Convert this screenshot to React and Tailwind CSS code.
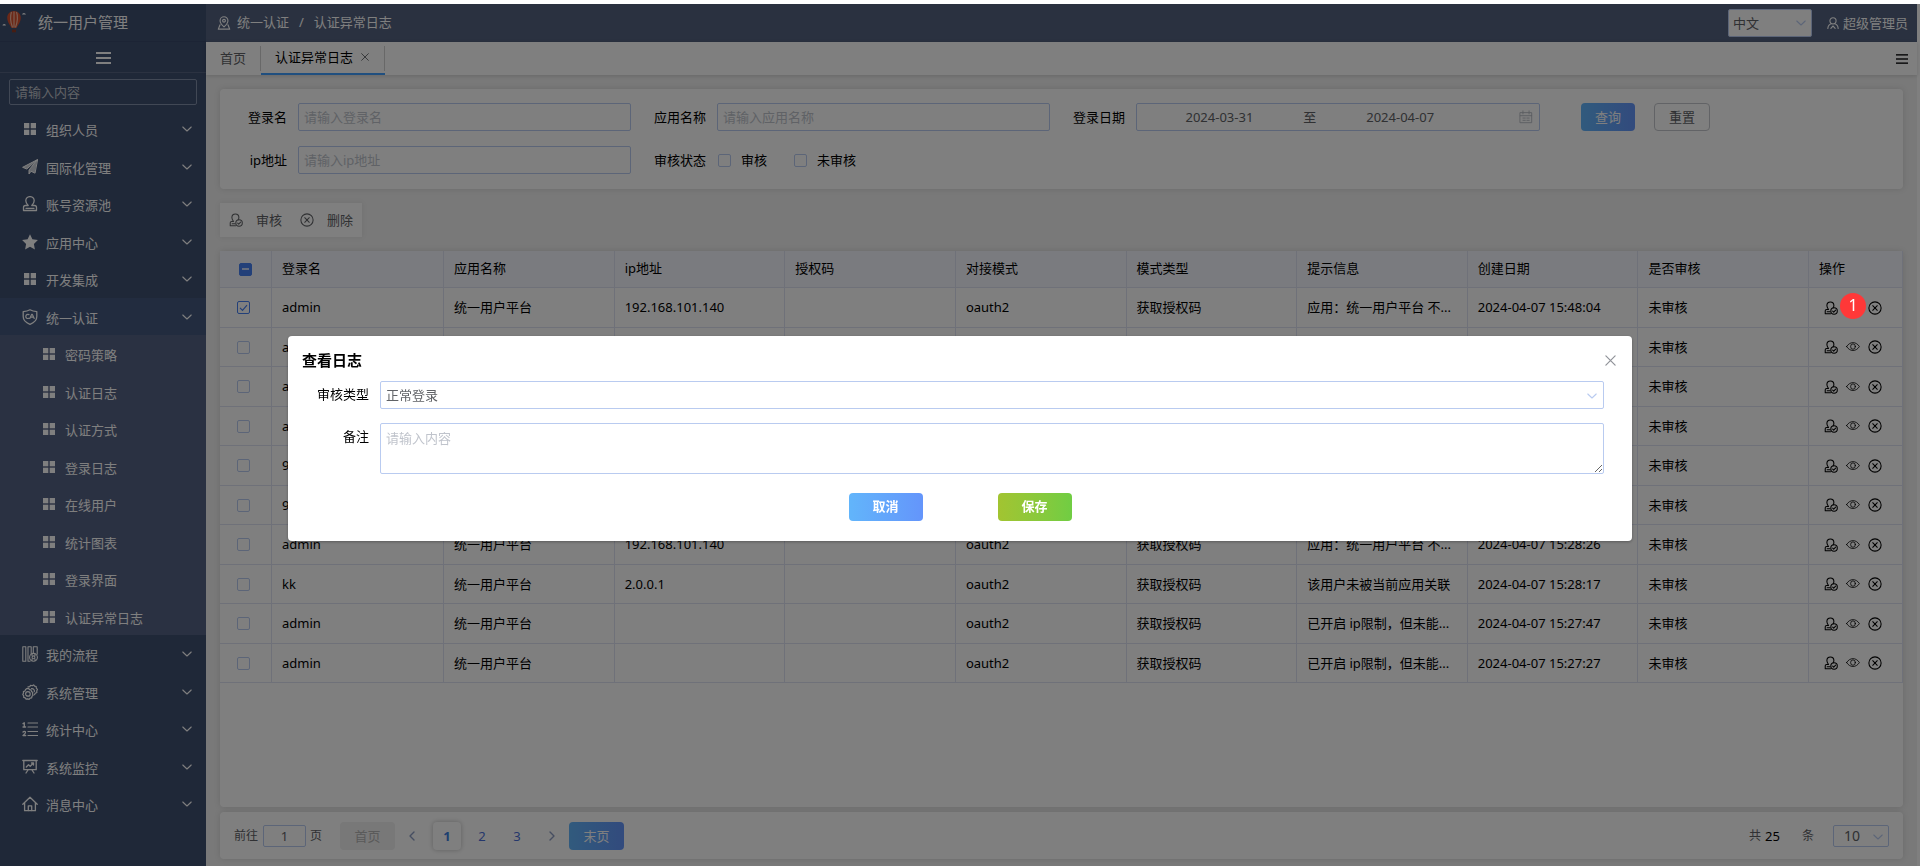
import React from 'react';

function Svg({ className = 'size-4', children, sw = 1.3, box = '0 0 16 16' }) {
  return (
    <svg viewBox={box} className={`shrink-0 ${className}`} fill="none" stroke="currentColor" strokeWidth={sw} strokeLinecap="round" strokeLinejoin="round" aria-hidden="true">
      {children}
    </svg>
  );
}

const GridIcon = ({ className = 'size-3' }) => (
  <svg viewBox="0 0 12 12" className={`shrink-0 ${className}`} fill="currentColor" aria-hidden="true">
    <rect x="0" y="0" width="5.3" height="5.3" /><rect x="6.7" y="0" width="5.3" height="5.3" />
    <rect x="0" y="6.7" width="5.3" height="5.3" /><rect x="6.7" y="6.7" width="5.3" height="5.3" />
  </svg>
);
const PlaneIcon = () => (
  <Svg sw={1}><path d="M15.300.7.600 8.300l4.200 1.700L15.300.7 7 11v4l2-2.700 3.700 1.700z" fill="currentColor" fillOpacity="0.75" /></Svg>
);
const StampIcon = () => (
  <Svg><path d="M6.200 9.500C4.800 8 3.800 6.600 3.800 4.800a4.200 4.200 0 0 1 8.400 0c0 1.800-1 3.200-2.400 4.700h2.700c1.300 0 2 .8 2 2v3H1.500v-3c0-1.200.7-2 2-2z" /><path d="M4 12.300h8" /></Svg>
);
const StarIcon = () => (
  <Svg><path d="m8 .3 2.400 5 5.500.8-4 3.800 1 5.500L8 12.800l-4.900 2.600 1-5.500L.1 6.100l5.500-.8z" fill="currentColor" stroke="none" /></Svg>
);
const ShieldIcon = () => (
  <Svg>
    <path d="M8 .8c2 1.200 4.300 1.700 6.800 1.800v5c0 3.700-2.500 6.100-6.800 7.700C3.700 13.700 1.200 11.300 1.200 7.600v-5C3.700 2.500 6 2 8 .8z" />
    <path d="M7 5.600C5.400 4.900 3.800 5.700 3.800 7.400s1.500 2.500 3 1.900M7.800 9.500l1.900-4.200h.6l1.900 4.200M8.700 8.200h2.700" strokeWidth="1.200" />
  </Svg>
);
const FlowIcon = () => (
  <Svg sw={1.1}>
    <path d="M.8.8h3v14.400h-3zM6 .8h3.200v7M6 .8v14.400h2M11.300 7V.8h3.900v7.500" /><circle cx="11.500" cy="11.300" r="3.900" /><circle cx="11.500" cy="11.300" r="1.400" /><path d="M10 8v1.500M13 8v1.500M10 14.500V13M13 14.500V13" />
  </Svg>
);
const GearIcon = () => (
  <Svg sw={1.2}>
    <path d="M5 4.600l1.600-.2.900 1.300 1.500.2.500 1.500 1.300 1-.3 1.500.6 1.400-1.200 1.100-.2 1.500-1.600.3-1 1.200-1.500-.5-1.500.3-.9-1.300-1.500-.5v-1.500L.8 10.500l.7-1.400-.1-1.500 1.500-.6.7-1.400z" />
    <circle cx="5.900" cy="9.900" r="2.300" />
    <path d="M6 2.900l1.700-.3L8.600 1.300l1.500.5 1.500-.9 1 1.300 1.600.3.100 1.700 1.100 1.200-.7 1.500.2 1.600-1.600.7-.8 1.500M9.500 4.600a2.400 2.400 0 0 1 2.800 3" />
  </Svg>
);
const ListIcon = () => (
  <Svg sw={1.2}><path d="M6 2h9.500M6 6h9.500M6 10.500h9.500M6 14.500h9.500" /><path d="M1 2.600 2.300 1.800V6M1 6h2.600M1 11q1.300-1.300 2.400-.2c.8 1.300-1.200 2.300-2.400 3.700h2.700" strokeWidth="1.300" /></Svg>
);
const BoardIcon = () => (
  <Svg><path d="M.8 1.500h14.400M1.800 1.500v9.200h12.400V1.500M6 11l-2 3M10 11l2 3" /><path d="M4.300 8l2.200-2.300 1.700 1.600 3.300-3.300M9.500 4h2v2" /></Svg>
);
const HomeIcon = () => (
  <Svg><path d="M.8 8.200 8 1.200l7.200 7M2.600 7v7.700h10.800V7" /><path d="M6.300 14.500V9.800h3.400v4.700" /></Svg>
);
const Chevron = ({ className = 'size-2.5' }) => (
  <Svg className={className} sw={1.1} box="0 0 10 10"><path d="m.8 3 4.200 4 4.200-4" /></Svg>
);
const Bars = ({ className = 'w-3.5 h-3' }) => (
  <svg viewBox="0 0 15 12" preserveAspectRatio="none" className={className} fill="currentColor" aria-hidden="true">
    <rect width="15" height="2" /><rect y="5" width="15" height="2" /><rect y="10" width="15" height="2" />
  </svg>
);
const AuditIcon = () => (
  <Svg className="size-3.5" sw={1.2}>
    <path d="M7.500 14.500H1.400v-3.300c0-1 .7-1.600 1.700-1.600h2C4.300 8.300 3.300 7 3.300 5.100a4 4 0 0 1 8 0c0 1-.3 1.800-.8 2.600" /><path d="M3.600 12.300H7" />
    <circle cx="11.500" cy="11.400" r="3.700" /><path d="m9.900 11.500 1.200 1.200 2.200-2.300" />
  </Svg>
);
const EyeIcon = () => (
  <Svg className="size-3.5" sw={0.9}><path d="M.7 7.500C2.500 4.700 5 3 8 3s5.500 1.700 7.300 4.500C13.500 10.300 11 12 8 12S2.500 10.300.7 7.500z" /><ellipse cx="8" cy="7.500" rx="2.700" ry="3.100" /></Svg>
);
const CloseCircle = () => (
  <Svg className="size-3.5" sw={1.2}><circle cx="8" cy="8" r="7" /><path d="m5.400 5.400 5.200 5.200M10.600 5.400l-5.200 5.200" /></Svg>
);
const Cross = ({ className = 'size-2' }) => (
  <Svg className={className} sw={1.1} box="0 0 10 10"><path d="m.8.8 8.400 8.400M9.200.8.800 9.200" /></Svg>
);
const LocationIcon = () => (
  <Svg className="size-3.5"><path d="M8 12.500C5 9.800 3.500 7.800 3.500 5.400a4.500 4.500 0 0 1 9 0c0 2.400-1.500 4.400-4.500 7.100z" /><circle cx="8" cy="5.400" r="1.600" /><path d="M3.500 10 1.500 15h13l-2-5" /></Svg>
);
const UserIcon = () => (
  <Svg className="size-3" box="0 0 14 14"><circle cx="7" cy="4.500" r="3.600" /><path d="M1 13.300c.2-3 1.800-4.800 4-5.400M13 13.300c-.2-3-1.800-4.800-4-5.400M4.500 13.200 7 10.500l2.500 2.700" /></Svg>
);
const CalendarIcon = () => (
  <Svg className="size-3.5" sw={1}><path d="M1.500 3h13v11.500h-13zM1.500 6.500h13M4.500 1v3.500M11.500 1v3.500M4.500 9.200h2.700M9 9.200h2.700M4.500 11.800h2.700M9 11.800h2.700" /></Svg>
);
const Balloon = () => (
  <svg viewBox="0 0 26 24" className="h-6 w-[26px] shrink-0" aria-hidden="true">
    <path d="M12 1c4 0 6.800 3 6.800 6.800 0 4.200-3 7.700-4.500 10.200H9.700C8.200 15.500 5.200 12 5.200 7.800 5.200 4 8 1 12 1z" fill="#d9502f" />
    <path d="M9.500 2c-1.500 4-1 10 1 15.500M14.500 2c1.500 4 1 10-1 15.500M12 1.500v16" fill="none" stroke="#f3b9a0" strokeWidth="1.200" />
    <rect x="10" y="19.500" width="4" height="2.800" fill="#8a3a26" />
    <path d="M.5 15.500q0-1.500 1.700-1.500t1.700 1.500zM20 4.500q.4-1.500 1.900-1.500T24 4.500z" fill="#fff" />
  </svg>
);

const menuTop = [
  ['组织人员', GridIcon], ['国际化管理', PlaneIcon], ['账号资源池', StampIcon], ['应用中心', StarIcon], ['开发集成', GridIcon],
  ['统一认证', ShieldIcon, ['密码策略', '认证日志', '认证方式', '登录日志', '在线用户', '统计图表', '登录界面', '认证异常日志']],
  ['我的流程', FlowIcon], ['系统管理', GearIcon], ['统计中心', ListIcon], ['系统监控', BoardIcon], ['消息中心', HomeIcon],
];

function Sidebar() {
  return (
    <aside className="flex w-[206px] shrink-0 flex-col bg-[#3f5070] text-white">
      <div className="flex h-[38px] items-center gap-2.5 border-b border-[#38486a] pb-0.5 pl-0.5">
        <Balloon />
        <h1 className="text-[15px]">统一用户管理</h1>
      </div>
      <button type="button" aria-label="收起菜单" className="flex h-[31px] items-center justify-center border-b border-[#566482] pt-0.5"><Bars className="h-3 w-[15px]" /></button>
      <div className="px-[9px] pt-1.5">
        <input aria-label="搜索菜单" placeholder="请输入内容" className="block h-[26px] w-full rounded-xs border border-[#8390aa] bg-transparent px-[5px] placeholder:text-[#c0c4cc]" />
      </div>
      <nav className="pt-[5px]">
        <ul>
          {menuTop.map(([name, Icon, children], i) => (
            <li key={name}>
              <button type="button" className={`flex w-full items-center pr-3.5 pl-[22px] text-left ${i % 2 ? 'h-[37px]' : 'h-[38px]'} ${children ? 'bg-[#44587e]' : ''}`}>
                <span className="flex w-4 justify-center"><Icon /></span>
                <span className="flex-1 pt-0.5 pl-2">{name}</span>
                <Chevron />
              </button>
              {children && (
                <ul className="bg-[#556284]">
                  {children.map((c, j) => (
                    <li key={c}>
                      <a href="#" className={`flex items-center gap-2.5 pl-[43px] ${j % 2 ? 'h-[37px]' : 'h-[38px]'}`}>
                        <GridIcon />
                        <span className="pt-0.5">{c}</span>
                      </a>
                    </li>
                  ))}
                </ul>
              )}
            </li>
          ))}
        </ul>
      </nav>
    </aside>
  );
}

function Check({ label, checked, partial }) {
  return (
    <span className="relative flex size-[13px] shrink-0">
      <input type="checkbox" aria-label={label} defaultChecked={checked}
        className={`size-[13px] appearance-none rounded-xs border ${partial ? 'border-[#4680f2] bg-[#4680f2]' : checked ? 'border-[#4680f2]' : 'border-[#b9cbf0]'}`} />
      {partial && <span className="pointer-events-none absolute top-[5px] left-[3px] h-0.5 w-[7px] bg-[#c8d8fb]" />}
      {checked && (
        <svg viewBox="0 0 13 13" className="pointer-events-none absolute inset-0 text-[#4680f2]" fill="none" stroke="currentColor" strokeWidth="1.200"><path d="m3 6.800 2.500 2.500L10 4.200" /></svg>
      )}
    </span>
  );
}

const field = 'h-7 w-full min-w-0 rounded-xs border border-[#b9cbf0] bg-white px-[5px] placeholder:text-[#c0c4cc]';

function Filters() {
  return (
    <form className="grid h-[100px] shrink-0 grid-cols-[389fr_396fr_467fr_340fr] content-start gap-x-[23px] gap-y-[15px] rounded bg-white pt-3.5 pl-[22px] shadow-[0_0_6px_rgba(0,0,0,0.12)]">
      <div className="flex items-center gap-[11px]"><label htmlFor="login" className="w-[45px] shrink-0 text-right">登录名</label><input id="login" className={field} placeholder="请输入登录名" /></div>
      <div className="flex items-center gap-[11px]"><label htmlFor="app" className="shrink-0">应用名称</label><input id="app" className={field} placeholder="请输入应用名称" /></div>
      <div className="flex items-center gap-[11px]">
        <label htmlFor="from" className="shrink-0">登录日期</label>
        <div className="flex h-7 flex-1 items-center rounded-xs border border-[#b9cbf0] pr-1.5 pl-1 text-[#606266]">
          <input id="from" defaultValue="2024-03-31" className="w-[40%] min-w-0 text-center" />
          <span className="w-6 text-center">至</span>
          <input aria-label="结束日期" defaultValue="2024-04-07" className="w-[40%] min-w-0 text-center" />
          <span className="ml-auto text-[#b4b8c0]"><CalendarIcon /></span>
        </div>
      </div>
      <div className="flex gap-[19px] pl-[18px]">
        <button type="button" className="h-7 w-[54px] rounded bg-linear-to-r from-[#62b5fb] to-[#6495fb] text-white">查询</button>
        <button type="button" className="h-7 w-14 rounded border border-[#c4c6cc] text-[#606266]">重置</button>
      </div>
      <div className="flex items-center gap-[11px]"><label htmlFor="ip" className="w-[45px] shrink-0 text-right">ip地址</label><input id="ip" className={field} placeholder="请输入ip地址" /></div>
      <div className="flex items-center">
        <span className="mr-3">审核状态</span>
        <label className="flex items-center gap-2.5"><Check label="审核" />审核</label>
        <label className="ml-[27px] flex items-center gap-2.5"><Check label="未审核" />未审核</label>
      </div>
    </form>
  );
}

const longApp = '应用：统一用户平台 不...';
const longIp = '已开启 ip限制，但未能...';
const rows = [
  ['admin', '192.168.101.140', longApp, '2024-04-07 15:48:04'],
  ['admin', '192.168.101.140', longApp, '2024-04-07 15:47:31'],
  ['admin', '192.168.101.140', longApp, '2024-04-07 15:45:12'],
  ['admin', '192.168.101.140', longApp, '2024-04-07 15:40:56'],
  ['9001', '192.168.101.140', longApp, '2024-04-07 15:36:20'],
  ['9001', '192.168.101.140', longApp, '2024-04-07 15:31:08'],
  ['admin', '192.168.101.140', longApp, '2024-04-07 15:28:26'],
  ['kk', '2.0.0.1', '该用户未被当前应用关联', '2024-04-07 15:28:17'],
  ['admin', '', longIp, '2024-04-07 15:27:47'],
  ['admin', '', longIp, '2024-04-07 15:27:27'],
];
const heads = ['登录名', '应用名称', 'ip地址', '授权码', '对接模式', '模式类型', '提示信息', '创建日期', '是否审核'];

function LogTable() {
  return (
    <section className="flex-1 rounded bg-white shadow-[0_0_6px_rgba(0,0,0,0.12)]">
      <table className="w-full table-fixed border-separate border-spacing-0 text-left">
        <colgroup>
          <col className="w-[52px]" />
          {heads.map((h, i) => <col key={h} className={i === 0 ? 'w-[172px]' : ''} />)}
          <col className="w-[94px]" />
        </colgroup>
        <thead>
          <tr className="h-[37px] bg-[#f5f7ff]">
            <th className="border-r border-b border-[#dfe3f3] pl-[19px]"><Check label="全选" partial /></th>
            {[...heads, '操作'].map((h) => <th key={h} className="border-r border-b border-[#dfe3f3] px-2.5 pb-0.5 font-normal">{h}</th>)}
          </tr>
        </thead>
        <tbody>
          {rows.map(([name, ip, info, time], i) => (
            <tr key={time} className="odd:h-10 even:h-[39px]">
              <td className="border-r border-b border-[#dfe3f3] pl-[17px]"><Check label={`选择 ${time}`} checked={i === 0} /></td>
              {[name, '统一用户平台', ip, '', 'oauth2', '获取授权码', info, time, '未审核'].map((t, j) => (
                <td key={j} className="border-r border-b border-[#dfe3f3] px-2.5 pb-px whitespace-nowrap">{t}</td>
              ))}
              <td className="border-r border-b border-[#dfe3f3] pl-[15px]">
                <div className="flex gap-2">
                  <button type="button" aria-label="审核"><AuditIcon /></button>
                  <span className="relative flex">
                    <button type="button" aria-label="查看"><EyeIcon /></button>
                    {i === 0 && <span className="absolute -top-2 -left-1.5 z-20 flex size-[26px] items-center justify-center rounded-full bg-[#ff3838] pb-0.5 text-base text-white">1</span>}
                  </span>
                  <button type="button" aria-label="删除"><CloseCircle /></button>
                </div>
              </td>
            </tr>
          ))}
        </tbody>
      </table>
    </section>
  );
}

function Pager() {
  return (
    <footer className="mt-[5px] flex h-[47px] shrink-0 items-center rounded bg-white px-3.5 text-[#606266] shadow-[0_0_6px_rgba(0,0,0,0.12)]">
      <label htmlFor="goto" className="text-xs">前往</label>
      <input id="goto" defaultValue="1" className="mr-1 ml-[5px] h-[22px] w-[43px] rounded-xs border border-[#b9cbf0] text-center" />
      <span className="text-xs">页</span>
      <button type="button" className="ml-[18px] h-7 w-[55px] rounded bg-[#f0f0f0] text-[#b4b4b4]">首页</button>
      <nav aria-label="分页" className="mx-[3px] flex gap-[7px] text-[#4a6fd8]">
        <button type="button" aria-label="上一页" className="flex size-7 items-center justify-center text-[#8d9cc2]"><Svg className="size-2.5" box="0 0 10 10" sw={1.4}><path d="M7 1 3 5l4 4" /></Svg></button>
        <button type="button" className="size-7 rounded font-bold text-[#3a7fe0] shadow-[0_0_5px_rgba(0,0,0,0.25)]">1</button>
        <button type="button" className="size-7">2</button>
        <button type="button" className="size-7">3</button>
        <button type="button" aria-label="下一页" className="flex size-7 items-center justify-center text-[#8d9cc2]"><Svg className="size-2.5" box="0 0 10 10" sw={1.4}><path d="m3 1 4 4-4 4" /></Svg></button>
      </nav>
      <button type="button" className="h-7 w-[55px] rounded bg-linear-to-r from-[#62b5fb] to-[#6495fb] text-white">末页</button>
      <span className="ml-auto text-xs">共</span>
      <span className="ml-1 w-[37px] text-[13px] text-black">25</span>
      <span className="text-xs">条</span>
      <span className="relative ml-[19px] flex">
        <select aria-label="每页条数" className="h-[22px] w-14 appearance-none rounded-xs border border-[#b9cbf0] pl-2.5 text-sm leading-none"><option>10</option></select>
        <span className="pointer-events-none absolute top-[7px] right-1.5 text-[#b9cbf0]"><Chevron /></span>
      </span>
    </footer>
  );
}

function LogDialog() {
  return (
    <div className="fixed inset-x-0 top-1 bottom-0 z-10 bg-black/50">
      <div role="dialog" aria-modal="true" aria-labelledby="dlg-title" className="mx-auto mt-[332px] w-[70%] rounded bg-white pt-3 pr-7 pb-5 pl-3.5 shadow-[0_1px_3px_rgba(0,0,0,0.3)]">
        <div className="flex h-[25px] items-center justify-between">
          <h2 id="dlg-title" className="pb-0.5 text-[15px] font-bold">查看日志</h2>
          <button type="button" aria-label="关闭" className="-mr-4 p-1 text-[#909399]"><Cross className="size-[11px]" /></button>
        </div>
        <div className="mt-2 flex">
          <label htmlFor="kind" className="w-[67px] shrink-0 pt-[3px] text-right">审核类型</label>
          <span className="relative ml-[11px] flex flex-1">
            <select id="kind" className={`${field} appearance-none text-[#606266]`}><option>正常登录</option></select>
            <span className="pointer-events-none absolute top-2.5 right-[7px] text-[#b9cbf0]"><Chevron /></span>
          </span>
        </div>
        <div className="mt-3.5 flex">
          <label htmlFor="memo" className="w-[67px] shrink-0 pt-[3px] text-right">备注</label>
          <textarea id="memo" placeholder="请输入内容" className="ml-[11px] block h-[51px] flex-1 resize rounded-xs border border-[#b9cbf0] px-[5px] py-1 placeholder:text-[#c0c4cc]" />
        </div>
        <div className="mt-[19px] flex justify-center gap-[75px] pl-3.5 font-bold text-white">
          <button type="button" className="h-7 w-[74px] rounded bg-linear-to-r from-[#62b5fb] to-[#6495fb] pb-0.5">取消</button>
          <button type="button" className="h-7 w-[74px] rounded bg-linear-to-r from-[#a2c431] to-[#70cd43] pb-0.5">保存</button>
        </div>
      </div>
    </div>
  );
}

export default function App() {
  return (
    <div className="flex min-h-screen bg-white pt-1 pr-[3px] font-['Noto_Sans','Noto_Sans_CJK_SC',sans-serif] text-[13px] leading-5 text-black">
      <Sidebar />
      <div className="flex min-w-0 flex-1 flex-col bg-[#f2f2f2]">
        <header className="flex h-[38px] shrink-0 items-center bg-[#546280] pr-[9px] pl-[11px] text-white">
          <LocationIcon />
          <nav aria-label="位置" className="ml-1.5 flex gap-2.5 pb-0.5"><a href="#">统一认证</a><span>/</span><span>认证异常日志</span></nav>
          <span className="relative ml-auto flex">
            <select aria-label="语言" className="h-7 w-[84px] appearance-none rounded-xs border border-[#b9cbf0] bg-white pl-1 text-[#606266]"><option>中文</option></select>
            <span className="pointer-events-none absolute top-[9px] right-1.5 text-[#b9cbf0]"><Chevron /></span>
          </span>
          <button type="button" className="ml-[15px] flex items-center gap-1"><UserIcon />超级管理员</button>
        </header>
        <div className="flex h-[33px] shrink-0 items-stretch bg-white pr-[9px] shadow-[0_1px_4px_rgba(0,0,0,0.15)]">
          <a href="#" className="my-1 flex w-[55px] items-center border-r border-[#d0d0d0] pb-0.5 pl-3.5 text-[#606266]">首页</a>
          <div className="flex w-[124px] border-b-2 border-[#409eff] pt-1">
            <div className="mb-0.5 flex flex-1 items-center gap-2 border-r border-[#d0d0d0] pb-1 pl-3.5"><span>认证异常日志</span><button type="button" aria-label="关闭标签" className="text-[#606266]"><Cross /></button></div>
          </div>
          <button type="button" aria-label="标签菜单" className="ml-auto text-[#303133]"><Bars className="h-2.5 w-3" /></button>
        </div>
        <main className="flex flex-1 flex-col px-3.5 pt-3.5 pb-[7px]">
          <Filters />
          <div className="my-3.5 flex h-[34px] shrink-0 items-center gap-[18px] self-start bg-white px-[9px] text-[#606266] shadow-[0_0_6px_rgba(0,0,0,0.08)]">
            <button type="button" className="flex items-center gap-[13px]"><AuditIcon />审核</button>
            <button type="button" className="flex items-center gap-[13px]"><CloseCircle />删除</button>
          </div>
          <LogTable />
          <Pager />
        </main>
      </div>
      <LogDialog />
    </div>
  );
}
